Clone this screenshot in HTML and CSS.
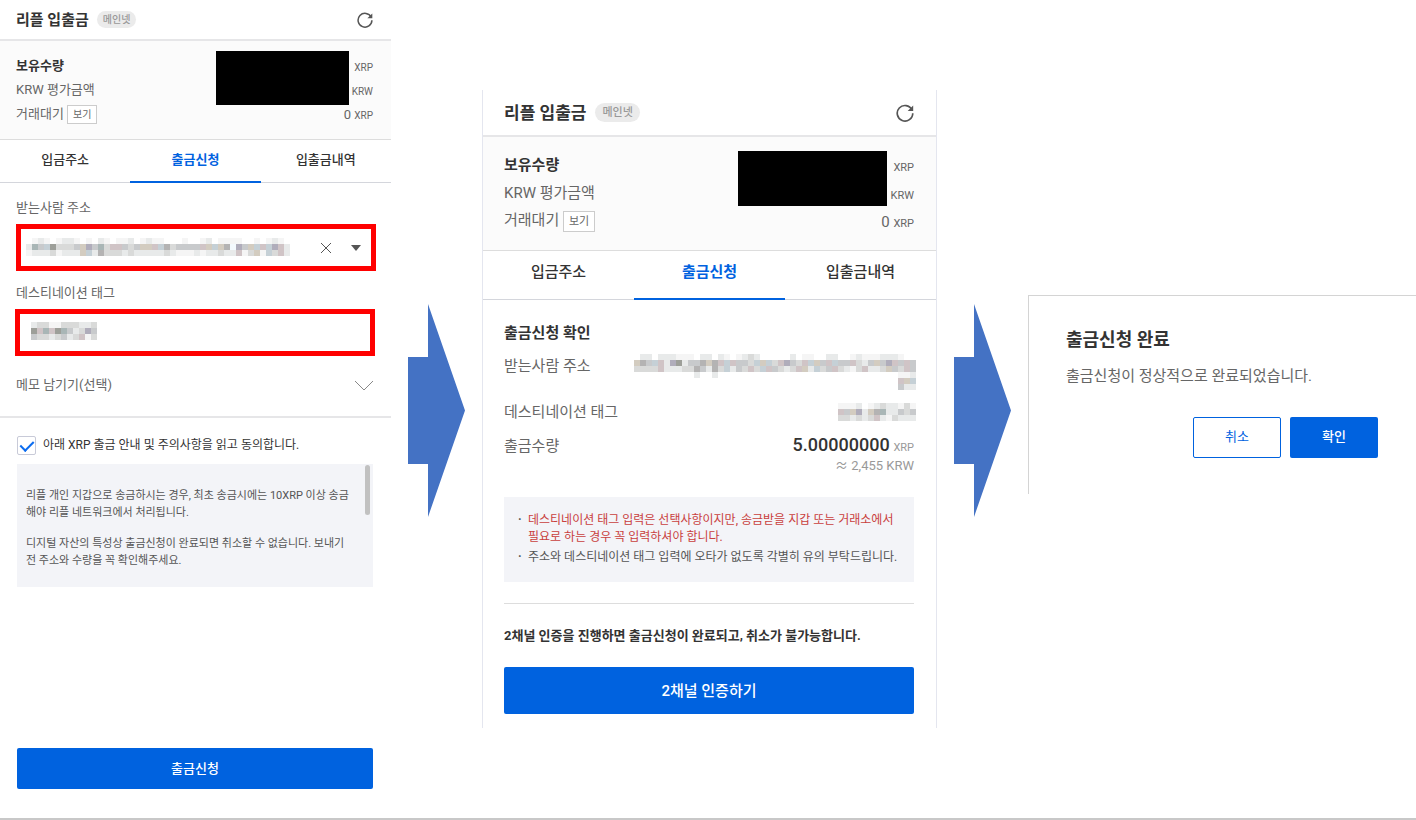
FILE: index.html
```
<!DOCTYPE html>
<html lang="ko">
<head>
  <meta charset="UTF-8" />
  <meta name="viewport" content="width=device-width, initial-scale=1.0"/>
  <title>리플 입출금</title>
  <link rel="stylesheet" href="styles.css">
</head>
<body>

<main class="flow">

  <section class="panel-request">
    <header class="panel-head">
      <h1>리플 입출금</h1>
      <span class="badge">메인넷</span>
      <button class="icon-btn refresh" type="button" aria-label="새로고침">
        <svg viewBox="0 0 16 16"><path d="M14.2 5.2A6.9 6.9 0 1 0 14.9 8.2" /><path class="tip" d="M15.3 1.4v4.9h-4.9z" /></svg>
      </button>
    </header>

    <div class="balance">
      <dl>
        <div class="row total"><dt>보유수량</dt><dd><small>XRP</small></dd></div>
        <div class="row"><dt>KRW 평가금액</dt><dd><small>KRW</small></dd></div>
        <div class="row"><dt>거래대기 <button class="view-btn" type="button">보기</button></dt><dd>0 <small>XRP</small></dd></div>
      </dl>
      <div class="mask"></div>
    </div>

    <nav class="tabs">
      <a href="#">입금주소</a>
      <a href="#" class="active">출금신청</a>
      <a href="#">입출금내역</a>
    </nav>

    <form class="request-form">
      <div class="fields">
        <label for="address">받는사람 주소</label>
        <div class="field field-address">
          <input id="address" type="text">
          <svg class="mosaic" data-mosaic="address"></svg>
          <button class="icon-btn clear" type="button" aria-label="지우기">
            <svg viewBox="0 0 12 12"><path d="M1 1l10 10M11 1L1 11" /></svg>
          </button>
          <button class="icon-btn open" type="button" aria-label="주소 목록">
            <svg viewBox="0 0 10 6"><path d="M0 0h10L5 6z" /></svg>
          </button>
        </div>

        <label for="tag">데스티네이션 태그</label>
        <div class="field field-tag">
          <input id="tag" type="text">
          <svg class="mosaic" data-mosaic="tag"></svg>
        </div>

        <button class="memo" type="button">
          메모 남기기(선택)
          <svg viewBox="0 0 20 11"><path d="M1 1l9 9 9-9" /></svg>
        </button>
      </div>

      <div class="agree">
        <label class="check"><input type="checkbox" checked> 아래 XRP 출금 안내 및 주의사항을 읽고 동의합니다.</label>
        <div class="terms">
          <p>리플 개인 지갑으로 송금하시는 경우, 최초 송금시에는 10XRP 이상 송금해야 리플 네트워크에서 처리됩니다.</p>
          <p>디지털 자산의 특성상 출금신청이 완료되면 취소할 수 없습니다. 보내기 전 주소와 수량을 꼭 확인해주세요.</p>
          <span class="thumb"></span>
        </div>
      </div>

      <button class="btn btn-primary" type="submit">출금신청</button>
    </form>
  </section>

  <svg class="arrow" viewBox="0 0 57 213"><path d="M20 0L57 106.500 20 213V160H0V53h20z" /></svg>

  <section class="panel-confirm">
    <header class="panel-head">
      <h1>리플 입출금</h1>
      <span class="badge">메인넷</span>
      <button class="icon-btn refresh" type="button" aria-label="새로고침">
        <svg viewBox="0 0 16 16"><path d="M14.2 5.2A6.9 6.9 0 1 0 14.9 8.2" /><path class="tip" d="M15.3 1.4v4.9h-4.9z" /></svg>
      </button>
    </header>

    <div class="balance">
      <dl>
        <div class="row total"><dt>보유수량</dt><dd><small>XRP</small></dd></div>
        <div class="row"><dt>KRW 평가금액</dt><dd><small>KRW</small></dd></div>
        <div class="row"><dt>거래대기 <button class="view-btn" type="button">보기</button></dt><dd>0 <small>XRP</small></dd></div>
      </dl>
      <div class="mask"></div>
    </div>

    <nav class="tabs">
      <a href="#">입금주소</a>
      <a href="#" class="active">출금신청</a>
      <a href="#">입출금내역</a>
    </nav>

    <div class="confirm">
      <h2>출금신청 확인</h2>
      <dl class="summary">
        <div class="row row-address"><dt>받는사람 주소</dt><dd><svg class="mosaic" data-mosaic="confirmAddress"></svg></dd></div>
        <div class="row"><dt>데스티네이션 태그</dt><dd><svg class="mosaic" data-mosaic="confirmTag"></svg></dd></div>
        <div class="row row-amount"><dt>출금수량</dt><dd><strong>5.00000000</strong> <small>XRP</small></dd></div>
      </dl>
      <p class="approx"><span>≈</span> 2,455 KRW</p>

      <ul class="notice">
        <li class="warn">데스티네이션 태그 입력은 선택사항이지만, 송금받을 지갑 또는 거래소에서 필요로 하는 경우 꼭 입력하셔야 합니다.</li>
        <li>주소와 데스티네이션 태그 입력에 오타가 없도록 각별히 유의 부탁드립니다.</li>
      </ul>

      <p class="auth-text">2채널 인증을 진행하면 출금신청이 완료되고, 취소가 불가능합니다.</p>
      <button class="btn btn-primary" type="button">2채널 인증하기</button>
    </div>
  </section>

  <svg class="arrow" viewBox="0 0 57 213"><path d="M20 0L57 106.500 20 213V160H0V53h20z" /></svg>

  <section class="done">
    <h2>출금신청 완료</h2>
    <p>출금신청이 정상적으로 완료되었습니다.</p>
    <div class="actions">
      <button class="btn btn-outline" type="button">취소</button>
      <button class="btn btn-primary" type="button">확인</button>
    </div>
  </section>

</main>

<script src="script.js"></script>
</body>
</html>
```
FILE: styles.css
```
:root {
  --blue: #0062df;
  --arrow: #4472c4;
  --text: #333333;
  --text-soft: #666666;
  --line: #e6e6e8;
  --bg-soft: #f3f4f8;
  --red: #ff0000;
}

* {
  margin: 0;
  padding: 0;
  box-sizing: border-box;
}

body {
  font-family: Roboto, "Noto Sans CJK KR", sans-serif;
  font-size: 13px;
  line-height: 20px;
  color: var(--text);
  background: #ffffff;
}

button,
input {
  font: inherit;
  color: inherit;
}

button {
  border: 0;
  background: none;
  cursor: pointer;
}

a {
  color: inherit;
  text-decoration: none;
}

svg {
  display: block;
}

.flow {
  display: grid;
  grid-template-columns: 391fr 57px 455fr 57px 388fr;
  gap: 17px;
  align-items: center;
  min-height: 100vh;
  border-bottom: 2px solid #c8c8c8;
}

/* shared panel parts */

.panel-head {
  display: flex;
  align-items: center;
  gap: 8px;
  height: 41px;
  padding: 0 18px 0 16px;
  border-bottom: 2px solid var(--line);
}

.panel-head h1 {
  font-size: 15px;
  font-weight: 700;
}

.badge {
  padding: 0 6px;
  border-radius: 10px;
  background: #ebebeb;
  color: #999999;
  font-size: 10px;
  font-weight: 500;
  line-height: 17px;
}

.icon-btn svg {
  fill: none;
  stroke: #555555;
}

.refresh {
  margin-left: auto;
}

.refresh svg {
  width: 16px;
  height: 16px;
  stroke-width: 1.5;
}

.refresh .tip {
  fill: #555555;
  stroke: none;
}

.balance {
  position: relative;
  padding: 13px 18px 13px 16px;
  background: #fbfbfb;
  border-bottom: 1px solid #dddddd;
}

.row {
  display: flex;
  justify-content: space-between;
  align-items: center;
}

.balance .row {
  height: 24px;
  color: var(--text-soft);
}

.balance .total dt {
  color: var(--text);
  font-weight: 700;
}

.balance dd {
  padding-top: 3px;
}

small {
  font-size: 10px;
}

.view-btn {
  padding: 0 5px;
  border: 1px solid #cccccc;
  background: #ffffff;
  font-size: 10px;
  line-height: 17px;
}

.mask {
  position: absolute;
  top: 10px;
  right: 42px;
  width: 34%;
  height: 54px;
  background: #000000;
}

.tabs {
  display: flex;
  height: 43px;
  border-bottom: 1px solid #d4d6dc;
}

.tabs a {
  flex: 1;
  height: 43px;
  line-height: 40px;
  text-align: center;
  font-weight: 500;
}

.tabs .active {
  border-bottom: 2px solid var(--blue);
  color: var(--blue);
  font-weight: 700;
}

.btn {
  height: 41px;
  border-radius: 2px;
}

.btn-primary {
  background: var(--blue);
  color: #ffffff;
  font-weight: 500;
}

.btn-outline {
  border: 1px solid var(--blue);
  background: #ffffff;
  color: var(--blue);
}

/* request */

.panel-request {
  display: flex;
  flex-direction: column;
  align-self: stretch;
}

.request-form {
  display: flex;
  flex: 1;
  flex-direction: column;
}

.fields {
  display: flex;
  flex-direction: column;
  padding: 15px 15px 14px;
  border-bottom: 2px solid var(--line);
  color: var(--text-soft);
}

.fields label {
  padding-left: 1px;
}

.field {
  position: relative;
  display: flex;
  align-items: center;
  height: 47px;
  margin: 6px 0 12px;
  padding-right: 10px;
  border: 5px solid var(--red);
}

.field input {
  flex: 1;
  min-width: 0;
  height: 100%;
  border: 0;
  outline: 0;
  background: none;
}

.field .mosaic {
  position: absolute;
  left: 5px;
  top: 9px;
}

.field-address {
  margin-left: 1px;
}

.field-tag {
  margin-right: 1px;
}

.field-tag .mosaic {
  left: 11px;
  top: 8px;
}

.clear svg {
  width: 12px;
  height: 12px;
}

.open {
  margin-left: 19px;
}

.open svg {
  width: 10px;
  height: 6px;
  fill: #555555;
  stroke: none;
}

.memo {
  display: flex;
  justify-content: space-between;
  align-items: center;
  height: 34px;
  padding: 0 2px 0 1px;
}

.memo svg {
  width: 20px;
  height: 11px;
  fill: none;
  stroke: #888888;
}

.agree {
  padding: 17px 18px 0 17px;
}

.check {
  display: flex;
  align-items: center;
  gap: 7px;
  font-size: 12px;
}

.check input {
  appearance: none;
  width: 19px;
  height: 19px;
  border: 1px solid #c8cad8;
  border-radius: 2px;
}

.check input:checked::before {
  content: "";
  display: block;
  width: 6px;
  height: 11px;
  margin: 1px 0 0 5px;
  border: solid #0b6cf0;
  border-width: 0 2px 2px 0;
  transform: rotate(45deg);
}

.terms {
  position: relative;
  height: 123px;
  margin-top: 9px;
  padding: 23px 16px 0 9px;
  overflow: hidden;
  background: var(--bg-soft);
  color: #555555;
  font-size: 11px;
  line-height: 17px;
}

.terms p {
  margin-bottom: 14px;
}

.thumb {
  position: absolute;
  top: 1px;
  right: 3px;
  width: 5px;
  height: 50px;
  border-radius: 3px;
  background: #c1c1c1;
}

.request-form > .btn {
  margin: auto 18px 29px 17px;
}

/* confirm */

.panel-confirm {
  border: solid #e4e6ef;
  border-width: 0 1px;
}

.panel-confirm .panel-head {
  height: 47px;
  gap: 9px;
  padding: 0 22px 0 21px;
}

.panel-confirm h1 {
  font-size: 17px;
}

.panel-confirm .badge {
  padding: 0 7px;
  font-size: 11px;
  line-height: 19px;
}

.panel-confirm .refresh svg {
  width: 18px;
  height: 18px;
}

.panel-confirm .balance {
  padding: 14px 22px 15px 21px;
  font-size: 15px;
}

.panel-confirm .balance .row {
  height: 28px;
}

.panel-confirm small,
.panel-confirm .view-btn {
  font-size: 11px;
}

.panel-confirm .view-btn {
  line-height: 19px;
}

.panel-confirm .mask {
  top: 14px;
  right: 49px;
  width: 33%;
  height: 55px;
}

.panel-confirm .tabs,
.panel-confirm .tabs a {
  height: 49px;
}

.panel-confirm .tabs a {
  font-size: 15px;
  line-height: 43px;
}

.confirm {
  display: flex;
  flex-direction: column;
  padding: 23px 22px 14px 21px;
}

.confirm h2 {
  font-size: 15px;
  font-weight: 700;
}

.summary {
  color: var(--text-soft);
  font-size: 15px;
}

.summary .row {
  height: 34px;
}

.summary .row-address {
  align-items: flex-start;
  height: 52px;
  padding-top: 11px;
}

.row-address dt {
  padding-top: 2px;
}

.summary .row-amount {
  height: 27px;
  padding-top: 7px;
}

.summary .mosaic {
  margin-right: -2px;
}

.summary strong {
  color: var(--text);
  font-size: 18px;
  font-weight: 500;
}

.summary small,
.approx {
  color: #999999;
}

.approx {
  text-align: right;
  line-height: 18px;
}

.approx span {
  font-family: "Noto Sans CJK KR", sans-serif;
}

.notice {
  margin-top: 22px;
  padding: 15px 14px 16px 24px;
  background: var(--bg-soft);
  color: #555555;
  font-size: 12px;
  line-height: 17px;
  list-style: none;
}

.notice li + li {
  margin-top: 3px;
}

.notice li::before {
  content: "·";
  float: left;
  margin-left: -10px;
  color: #555555;
  font-weight: 700;
}

.notice .warn {
  color: #c9403d;
}

.auth-text {
  margin: 21px 0;
  padding-top: 22px;
  border-top: 1px solid #dddddd;
  font-weight: 700;
}

.confirm .btn {
  height: 47px;
  font-size: 15px;
}

/* done */

.done {
  margin-bottom: 30px;
  padding: 32px 38px 36px 37px;
  border: solid #d4d4d4;
  border-width: 1px 0 0 1px;
}

.done h2 {
  font-size: 18px;
  font-weight: 700;
  line-height: 24px;
}

.done p {
  margin-top: 14px;
  color: var(--text-soft);
  font-size: 15px;
}

.actions {
  display: flex;
  justify-content: flex-end;
  gap: 9px;
  margin-top: 31px;
}

.actions .btn {
  width: 88px;
}

.arrow {
  width: 57px;
  height: 213px;
  margin-top: 3px;
  fill: var(--arrow);
}
```
FILE: script.js
```
// pixelated values: one string per row, one letter per cell, "." is empty
const CELL = 6;
const COLORS = {
  a: "#f5f5f5", b: "#e8eaea", c: "#d9dad9", d: "#c8cacc", e: "#b4b3b3", f: "#9d9f99",
  g: "#a9b6b6", h: "#d3ccc0", i: "#b0adbb", j: "#c5d0d6", k: "#d0c4c6", l: "#f3f9fd"
};
const MOSAICS = {
  address: [
    ".aba.abba.a.ba.aab.abaa...a..ab.aaaa..a.aba.",
    "bgdjfcccdhidgckkdcdhhkjecddddkhjhelidhjkjikb",
    "abbbcabbbhjbecccbcbbbbbcbaaababbcbbkachajckb"
  ],
  tag: [
    "bccaacccbbc",
    "fkgkfgdbcid",
    "dccbcdbckac"
  ],
  confirmAddress: [
    ".bb.bbbaaa.bb.ba.abcb.....b.aa..bb..abaaabbba..",
    "hedjkbifbddehekjkddcjhjckidckjhdkjddkcbdhdikdkd",
    "cccckbbbccedbecjbdckcjkdcbckhbjcdkcbackbbchdckd",
    "..........b..b..............................aab",
    "............................................khj",
    "............................................dbb"
  ],
  confirmTag: [
    "aaab.abcbbaca",
    "kdhibhegbbdcd",
    "ccbcbckbacbbb"
  ]
};

document.querySelectorAll("[data-mosaic]").forEach(svg => {
  const rows = MOSAICS[svg.dataset.mosaic];
  svg.setAttribute("width", rows[0].length * CELL);
  svg.setAttribute("height", rows.length * CELL);
  rows.forEach((row, y) => {
    [...row].forEach((letter, x) => {
      if (letter === ".") return;
      const rect = document.createElementNS("http://www.w3.org/2000/svg", "rect");
      rect.setAttribute("x", x * CELL);
      rect.setAttribute("y", y * CELL);
      rect.setAttribute("width", CELL);
      rect.setAttribute("height", CELL);
      rect.setAttribute("fill", COLORS[letter]);
      svg.appendChild(rect);
    });
  });
});
```
